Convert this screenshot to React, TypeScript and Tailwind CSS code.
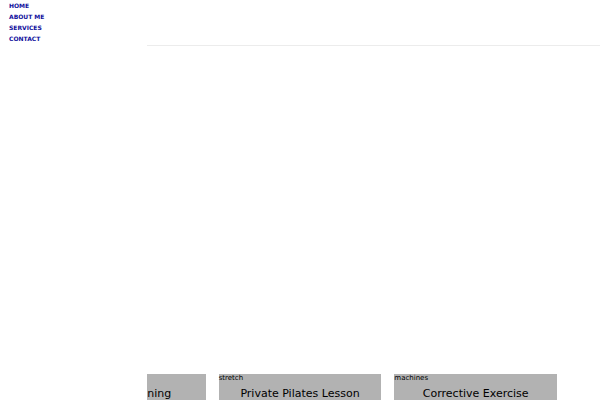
const links = [
  { label: 'HOME', href: '#home' },
  { label: 'ABOUT ME', href: '#about' },
  { label: 'SERVICES', href: '#services' },
  { label: 'CONTACT', href: '#contact' },
]

const services = [
  { caption: 'weights', title: 'Personal Training' },
  { caption: 'stretch', title: 'Private Pilates Lesson' },
  { caption: 'machines', title: 'Corrective Exercise' },
]

function SideNav() {
  return (
    <nav className="absolute inset-y-0 left-0 w-[147px] bg-white pl-[9px]">
      <ul>
        {links.map((link) => (
          <li key={link.href} className="h-[11px]">
            <a
              href={link.href}
              className="block text-[6px] font-bold leading-[11px] text-[#0f0f9c]"
            >
              {link.label}
            </a>
          </li>
        ))}
      </ul>
    </nav>
  )
}

function ServiceCard({ caption, title }: { caption: string; title: string }) {
  return (
    <article className="min-w-0 flex-1 bg-[#b2b2b2] text-black">
      <p className="text-[7px] leading-[9px]">{caption}</p>
      <h2 className="mt-1 text-center text-[11px] leading-[13px]">{title}</h2>
    </article>
  )
}

export default function App() {
  return (
    <div className="relative flex h-screen flex-col overflow-hidden bg-white font-['DejaVu_Sans',sans-serif]">
      <header className="h-[46px] shrink-0 border-b border-[#ececec]" />
      <main className="flex min-h-0 flex-1 flex-col">
        <div id="home" className="h-[328px] shrink-0" />
        <section id="services" className="flex shrink-0 gap-[13px] px-[43px]">
          {services.map((service) => (
            <ServiceCard key={service.title} {...service} />
          ))}
        </section>
      </main>
      <SideNav />
    </div>
  )
}
